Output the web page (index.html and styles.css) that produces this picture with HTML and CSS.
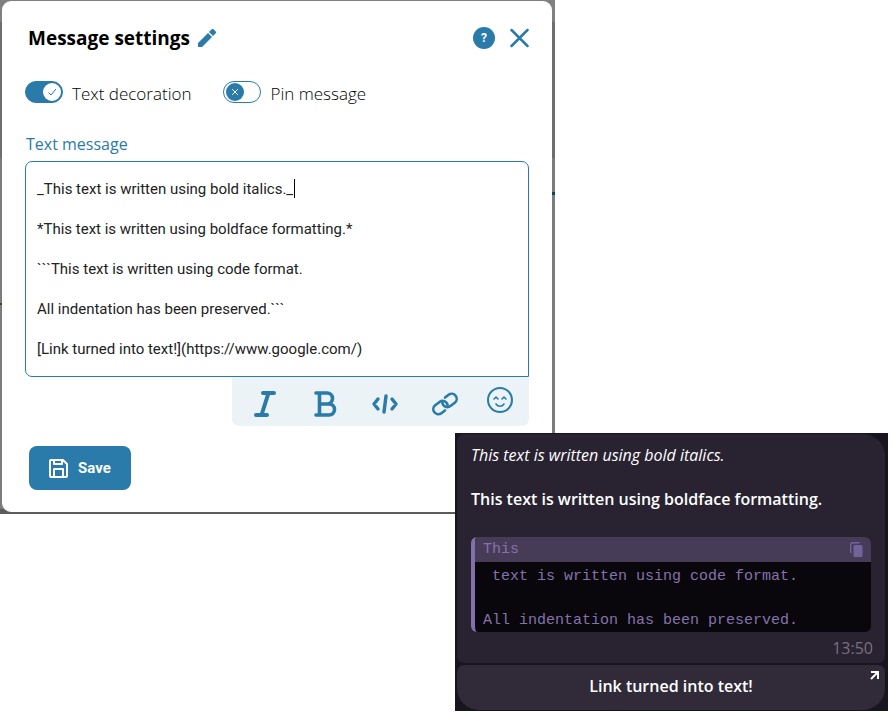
FILE: index.html
```html
<!DOCTYPE html>
<html lang="en">
<head>
    <meta charset="UTF-8">
    <meta name="viewport" content="width=device-width, initial-scale=1.0">
    <title>Message settings</title>
    <link rel="stylesheet" href="styles.css">
</head>
<body>
    <div class="page">
        <div class="backdrop">
            <main class="modal">
                <header class="modal-header">
                    <h1>Message settings</h1>
                    <button class="icon-btn" type="button" aria-label="Rename">
                        <svg width="18" height="18" viewBox="0 0 18 18" fill="currentColor"><path d="M0 14v4h4L14 8l-4-4zM11 3l4 4 2.500-2.500a1.600 1.600 0 0 0 0-2.300L15.800.5a1.600 1.600 0 0 0-2.300 0z"/></svg>
                    </button>
                    <button class="help-btn" type="button" aria-label="Help">?</button>
                    <button class="icon-btn" type="button" aria-label="Close">
                        <svg width="20" height="20" viewBox="0 0 20 20" fill="none" stroke="currentColor" stroke-width="2.5" stroke-linecap="round"><path d="M2.5 2l16 16M18.5 2l-16 16"/></svg>
                    </button>
                </header>

                <div class="options">
                    <label class="option">
                        <span class="switch">
                            <input type="checkbox" checked>
                            <svg class="mark" viewBox="0 0 18 18" fill="none" stroke="currentColor"><path d="M5.5 9.5L8 12l5-6"/></svg>
                        </span>
                        Text decoration
                    </label>
                    <label class="option">
                        <span class="switch">
                            <input type="checkbox">
                            <svg class="mark" viewBox="0 0 18 18" fill="none" stroke="currentColor"><path d="M6.2 6.2l5.6 5.6M11.8 6.2l-5.6 5.6"/></svg>
                        </span>
                        Pin message
                    </label>
                </div>

                <label class="field-label" for="message">Text message</label>
                <div class="editor">
                    <textarea id="message" rows="9" spellcheck="false">_This text is written using bold italics._

*This text is written using boldface formatting.*

```This text is written using code format.

All indentation has been preserved.```

[Link turned into text!](https://www.google.com/)</textarea>
                    <span class="caret"></span>
                </div>
                <div class="toolbar">
                    <button type="button" aria-label="Italic">
                        <svg width="26" height="28" viewBox="0 0 26 28" fill="none" stroke="currentColor" stroke-width="4" stroke-linecap="round"><path d="M11 3h11M4 25h11M16.5 3l-7 22"/></svg>
                    </button>
                    <button type="button" aria-label="Bold">
                        <svg width="26" height="28" viewBox="0 0 26 28" fill="none" stroke="currentColor" stroke-width="3.6" stroke-linecap="round" stroke-linejoin="round"><path d="M4 3h11a5.5 5.5 0 0 1 0 11H7.5M15 14h2a5.5 5.5 0 0 1 0 11H4M7.5 3v22"/></svg>
                    </button>
                    <button type="button" aria-label="Code">
                        <svg width="28" height="22" viewBox="0 0 28 22" fill="none" stroke="currentColor" stroke-width="3.4" stroke-linecap="round" stroke-linejoin="round"><path d="M7 6l-4 5 4 5M21 6l4 5-4 5M15 3l-2 16"/></svg>
                    </button>
                    <button type="button" aria-label="Link">
                        <svg width="28" height="24" viewBox="0 0 28 24" fill="none" stroke="currentColor" stroke-width="2.6" stroke-linecap="round">
                            <g transform="rotate(-38 14 12)">
                                <path d="M10 17H5.5a5 5 0 0 1 0-10H11a5 5 0 0 1 4 8"/>
                                <path d="M18 7h4.5a5 5 0 0 1 0 10H17a5 5 0 0 1-4-8"/>
                            </g>
                        </svg>
                    </button>
                    <button class="emoji" type="button" aria-label="Emoji">
                        <svg width="28" height="28" viewBox="0 0 28 28" fill="none" stroke="currentColor" stroke-width="2" stroke-linecap="round" stroke-linejoin="round"><circle cx="14" cy="14" r="12"/><path d="M8 13l2-2 2 2M16 13l2-2 2 2M10 18c2 3 6 3 8 0" stroke-width="1.6"/></svg>
                    </button>
                </div>

                <button class="save-btn" type="button">
                    <svg width="19" height="19" viewBox="0 0 19 19" fill="none" stroke="currentColor" stroke-width="2" stroke-linejoin="round"><path d="M1 2a1 1 0 0 1 1-1h12l4 4v12a1 1 0 0 1-1 1H2a1 1 0 0 1-1-1zM5 1v4h8V1M5 18v-8h9v8"/></svg>
                    Save
                </button>
            </main>
        </div>

        <section class="chat">
            <article class="bubble">
                <p><em>This text is written using bold italics.</em></p>
                <p><strong>This text is written using boldface formatting.</strong></p>
                <div class="code">
                    <div class="code-head">
                        <span>This</span>
                        <button type="button" aria-label="Copy code">
                            <svg width="13" height="15" viewBox="0 0 13 15"><rect x="3.5" y="3" width="9" height="12" rx="1.5" fill="currentColor"/><path d="M.7 11V3Q.7.7 3 .7h6.5" fill="none" stroke="currentColor" stroke-width="1.4"/></svg>
                        </button>
                    </div>
                    <pre> text is written using code format.

All indentation has been preserved.</pre>
                </div>
                <time>13:50</time>
            </article>
            <a class="link-btn" href="https://www.google.com/">
                Link turned into text!
                <svg class="arrow" width="9" height="9" viewBox="0 0 9 9" fill="none" stroke="currentColor" stroke-width="2"><path d="M1 1h7v7M8 1L1 8"/></svg>
            </a>
        </section>
    </div>
</body>
</html>
```

FILE: styles.css
```css
* {
    box-sizing: border-box;
}

body {
    margin: 0;
    background-color: #fff;
    font-family: "Open Sans", sans-serif;
}

button {
    padding: 0;
    border: none;
    background: none;
    color: #2a7ba9;
    cursor: pointer;
}

svg {
    display: block;
}

.page {
    max-width: 888px;
}

/* Modal */
.backdrop {
    max-width: 555px;
    padding: 1px 3px 2px 2px;
    background:
        linear-gradient(#1d5a1d, #1d5a1d) 0 303px / 2px 2px no-repeat,
        linear-gradient(#0f405c, #0f405c) right 192px / 3px 3px no-repeat,
        linear-gradient(#808080 22px, #6e6e6e 22px, #6e6e6e 158px, #7c7c7c 158px, #7c7c7c 509px, #5c5c5c 509px);
}

.modal {
    padding: 24px 23px 22px 23px;
    border-radius: 9px;
    background-color: #fff;
}

.modal-header {
    display: flex;
    align-items: center;
    gap: 8px;
    height: 26px;
    padding-left: 3px;
}

h1 {
    margin: 0;
    font-size: 19px;
    font-weight: 700;
    line-height: 26px;
    color: #000;
}

.help-btn {
    width: 22px;
    height: 22px;
    margin-left: auto;
    border-radius: 50%;
    background-color: #2a7ba9;
    color: #fff;
    font-family: Roboto, sans-serif;
    font-size: 12px;
    font-weight: 700;
}

.icon-btn:last-child {
    margin-left: 6px;
}

.options {
    display: flex;
    gap: 32px;
    margin-top: 30px;
}

.option {
    display: flex;
    align-items: center;
    gap: 9px;
    height: 24px;
    font-size: 17px;
    font-weight: 300;
    color: #000;
}

.switch {
    display: grid;
    align-items: center;
    width: 38px;
    height: 22px;
    margin-bottom: 2px;
}

.switch input,
.mark {
    grid-area: 1 / 1;
}

.switch input {
    appearance: none;
    width: 100%;
    height: 100%;
    margin: 0;
    border: 1px solid #2a7ba9;
    border-radius: 11px;
    background-color: #fff;
}

.mark {
    width: 18px;
    height: 18px;
    margin-left: 3px;
    border-radius: 50%;
    background-color: #2a7ba9;
    color: #fff;
    pointer-events: none;
}

.switch input:checked {
    background-color: #2a7ba9;
}

.switch input:checked + .mark {
    margin-left: 18px;
    background-color: #fff;
    color: #2a7ba9;
}

.field-label {
    display: block;
    margin: 27px 0 5px 1px;
    font-size: 16px;
    line-height: 24px;
    color: #2a7ba9;
}

.editor {
    position: relative;
}

textarea {
    display: block;
    width: 100%;
    height: 216px;
    padding: 17px 11px;
    border: 1px solid #2a7ba9;
    border-radius: 7px 7px 0 7px;
    background-color: #fff;
    color: #222;
    font-family: Roboto, sans-serif;
    font-size: 15px;
    line-height: 20px;
    overflow: hidden;
    resize: none;
    outline: none;
}

.caret {
    position: absolute;
    top: 18px;
    left: 269px;
    width: 1px;
    height: 19px;
    background-color: #000;
}

.toolbar {
    display: grid;
    grid-template-columns: repeat(4, 60px) 50px;
    align-items: center;
    justify-items: center;
    width: 297px;
    height: 49px;
    margin-left: auto;
    padding: 4px 0 0 3px;
    border-radius: 0 0 7px 7px;
    background-color: #ebf3f7;
}

.emoji {
    padding-bottom: 8px;
}

.save-btn {
    display: flex;
    align-items: center;
    gap: 10px;
    height: 44px;
    margin: 20px 0 0 4px;
    padding: 0 20px;
    border-radius: 8px;
    background-color: #2a7ba9;
    color: #fff;
    font-family: Roboto, sans-serif;
    font-size: 15px;
    font-weight: 700;
}

/* Chat preview, overlaps the corner of the modal */
.chat {
    position: relative;
    display: flex;
    flex-direction: column;
    gap: 2px;
    max-width: 433px;
    margin: -81px 0 0 auto;
    padding: 1px 3px 1px 2px;
    background-color: #181520;
    color: #fff;
    font-size: 16px;
}

.bubble {
    display: flex;
    flex-direction: column;
    padding: 10px 14px 4px;
    border-radius: 7px 22px 7px 7px;
    background-color: #292331;
}

.bubble p {
    margin: 0 0 22px;
    line-height: 22px;
}

.bubble strong {
    font-weight: 600;
}

.code {
    margin-top: 5px;
    border-left: 4px solid #8271a8;
    border-radius: 6px;
    background-color: #09070c;
    color: #8473ab;
    font-family: "Liberation Mono", monospace;
    font-size: 15px;
    overflow: hidden;
}

.code-head {
    display: flex;
    align-items: center;
    justify-content: space-between;
    height: 25px;
    padding: 0 8px;
    background-color: #463c57;
}

.code-head button {
    color: #72639a;
}

.code pre {
    margin: 0;
    padding: 4px 8px 0;
    font-family: inherit;
    line-height: 22px;
}

.bubble time {
    align-self: flex-end;
    margin: 5px -2px 0 0;
    line-height: 22px;
    color: #77717f;
}

.link-btn {
    position: relative;
    padding: 10px 11px 13px;
    border-radius: 7px 7px 22px 22px;
    background-color: #302a39;
    color: #fff;
    font-weight: 600;
    line-height: 22px;
    text-align: center;
    text-decoration: none;
}

.arrow {
    position: absolute;
    top: 6px;
    right: 6px;
}
```
